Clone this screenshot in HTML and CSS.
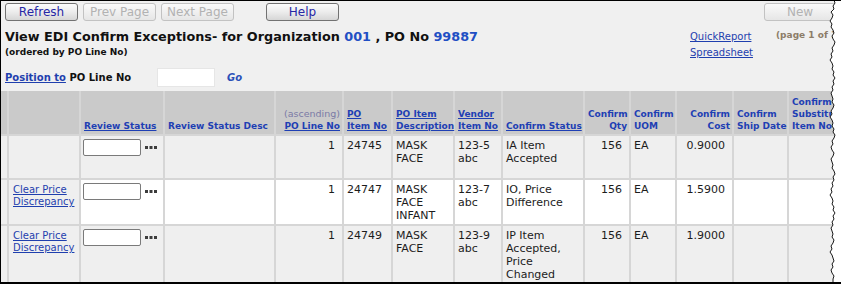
FILE: index.html
```html
<!DOCTYPE html>
<html lang="en">
<head>
    <meta charset="UTF-8">
    <meta name="viewport" content="width=device-width, initial-scale=1.0">
    <title>View EDI Confirm Exceptions</title>
    <link rel="stylesheet" href="styles.css">
</head>
<body>
    <div class="frame">
        <div class="toolbar">
            <button class="btn">Refresh</button>
            <button class="btn" disabled>Prev Page</button>
            <button class="btn" disabled>Next Page</button>
            <button class="btn btn-help">Help</button>
            <button class="btn btn-new" disabled>New</button>
        </div>

        <div class="heading">
            <div class="heading-main">
                <h1>View EDI Confirm Exceptions- for Organization <span class="key">001</span> , PO No <span class="key">99887</span></h1>
                <div class="sort-note">(ordered by PO Line No)</div>
            </div>
            <div class="reports">
                <a href="#">QuickReport</a>
                <a href="#">Spreadsheet</a>
            </div>
            <div class="pager">(page 1 of 1)</div>
        </div>

        <div class="position">
            <span class="position-label"><a href="#">Position to</a> PO Line No</span>
            <input type="text" class="position-input">
            <a href="#" class="go">Go</a>
        </div>

        <table class="grid">
            <thead>
                <tr>
                    <th class="w-sel"></th>
                    <th class="w-act"></th>
                    <th class="w-rev"><a href="#">Review Status</a></th>
                    <th class="w-desc"><span>Review Status Desc</span></th>
                    <th class="w-line num"><span class="asc">(ascending)</span><br><a href="#">PO Line No</a></th>
                    <th class="w-item"><a href="#">PO<br>Item No</a></th>
                    <th class="w-itemdesc"><a href="#">PO Item<br>Description</a></th>
                    <th class="w-vendor"><a href="#">Vendor<br>Item No</a></th>
                    <th class="w-status"><a href="#">Confirm Status</a></th>
                    <th class="w-qty num"><span>Confirm<br>Qty</span></th>
                    <th class="w-uom"><span>Confirm<br>UOM</span></th>
                    <th class="w-cost num"><span>Confirm<br>Cost</span></th>
                    <th class="w-ship"><span>Confirm<br>Ship Date</span></th>
                    <th class="w-sub"><span>Confirm<br>Substitute<br>Item No</span></th>
                </tr>
            </thead>
            <tbody>
                <tr class="row-1 shaded">
                    <td class="side"></td>
                    <td class="side"></td>
                    <td class="rev"><input type="text" class="rev-input"><svg class="dots" width="12" height="4" viewBox="0 0 12 4"><rect x="0" y="0" width="3" height="3"/><rect x="4.5" y="0" width="3" height="3"/><rect x="9" y="0" width="3" height="3"/></svg></td>
                    <td></td>
                    <td class="num">1</td>
                    <td>24745</td>
                    <td>MASK FACE</td>
                    <td>123-5 abc</td>
                    <td>IA Item Accepted</td>
                    <td class="num">156</td>
                    <td>EA</td>
                    <td class="num">0.9000</td>
                    <td></td>
                    <td></td>
                </tr>
                <tr class="row-2">
                    <td class="side"></td>
                    <td class="side"><a href="#" class="action">Clear Price Discrepancy</a></td>
                    <td class="rev"><input type="text" class="rev-input"><svg class="dots" width="12" height="4" viewBox="0 0 12 4"><rect x="0" y="0" width="3" height="3"/><rect x="4.5" y="0" width="3" height="3"/><rect x="9" y="0" width="3" height="3"/></svg></td>
                    <td></td>
                    <td class="num">1</td>
                    <td>24747</td>
                    <td>MASK FACE INFANT</td>
                    <td>123-7 abc</td>
                    <td>IO, Price Difference</td>
                    <td class="num">156</td>
                    <td>EA</td>
                    <td class="num">1.5900</td>
                    <td></td>
                    <td></td>
                </tr>
                <tr class="row-3 shaded">
                    <td class="side"></td>
                    <td class="side"><a href="#" class="action">Clear Price Discrepancy</a></td>
                    <td class="rev"><input type="text" class="rev-input"><svg class="dots" width="12" height="4" viewBox="0 0 12 4"><rect x="0" y="0" width="3" height="3"/><rect x="4.5" y="0" width="3" height="3"/><rect x="9" y="0" width="3" height="3"/></svg></td>
                    <td></td>
                    <td class="num">1</td>
                    <td>24749</td>
                    <td>MASK FACE</td>
                    <td>123-9 abc</td>
                    <td>IP Item Accepted, Price Changed</td>
                    <td class="num">156</td>
                    <td>EA</td>
                    <td class="num">1.9000</td>
                    <td></td>
                    <td></td>
                </tr>
            </tbody>
        </table>

        <!-- torn right edge of the capture -->
        <svg class="torn" width="14" height="284" viewBox="0 0 14 284">
            <path class="torn-fill" d="M7 0 L8 3 L6 6 L7 9 L4 12 L6 15 L5 18 L3 21 L5 24 L4 27 L6 30 L7 33 L5 36 L6 39 L8 42 L7 45 L5 48 L6 51 L4 54 L5 57 L3 60 L5 63 L6 66 L5 69 L7 72 L6 75 L8 78 L6 81 L7 84 L5 87 L6 90 L4 93 L5 96 L6 99 L5 102 L7 105 L6 108 L4 111 L5 114 L3 117 L5 120 L6 123 L5 126 L7 129 L6 132 L8 135 L7 138 L5 141 L6 144 L4 147 L5 150 L7 153 L6 156 L4 159 L5 162 L6 165 L5 168 L7 171 L8 174 L6 177 L7 180 L5 183 L6 186 L4 189 L5 192 L3 195 L5 198 L6 201 L5 204 L7 207 L6 210 L8 213 L6 216 L7 219 L5 222 L6 225 L4 228 L5 231 L6 234 L5 237 L7 240 L6 243 L4 246 L5 249 L3 252 L5 255 L6 258 L7 261 L5 264 L6 267 L4 270 L5 273 L7 276 L6 279 L6 284 L14 284 L14 0 Z"/>
            <polyline class="torn-line" points="7,0 8,3 6,6 7,9 4,12 6,15 5,18 3,21 5,24 4,27 6,30 7,33 5,36 6,39 8,42 7,45 5,48 6,51 4,54 5,57 3,60 5,63 6,66 5,69 7,72 6,75 8,78 6,81 7,84 5,87 6,90 4,93 5,96 6,99 5,102 7,105 6,108 4,111 5,114 3,117 5,120 6,123 5,126 7,129 6,132 8,135 7,138 5,141 6,144 4,147 5,150 7,153 6,156 4,159 5,162 6,165 5,168 7,171 8,174 6,177 7,180 5,183 6,186 4,189 5,192 3,195 5,198 6,201 5,204 7,207 6,210 8,213 6,216 7,219 5,222 6,225 4,228 5,231 6,234 5,237 7,240 6,243 4,246 5,249 3,252 5,255 6,258 7,261 5,264 6,267 4,270 5,273 7,276 6,279 6,284"/>
        </svg>
    </div>
</body>
</html>
```

FILE: styles.css
```css
body {
    margin: 0;
    font-family: "DejaVu Sans", Verdana, sans-serif;
    color: #1c1c1c;
    background: #fff;
}
a {
    color: #1f3fae;
}
.frame {
    position: relative;
    width: 841px;
    height: 284px;
    box-sizing: border-box;
    border: 1px solid #000;
    border-right: none;
    border-bottom-width: 2px;
    background: #f0f0f0;
    overflow: hidden;
}

/* toolbar */
.toolbar {
    display: flex;
    gap: 5px;
    padding: 2px 5px 0 4px;
}
.btn {
    width: 73px;
    height: 18px;
    padding: 0;
    font-family: "DejaVu Sans", Verdana, sans-serif;
    font-size: 12px;
    line-height: 16px;
    color: #2626a6;
    background: linear-gradient(#fcfcfc, #ececec 50%, #d6d6d6);
    border: 1px solid #727272;
    border-radius: 3px;
}
.btn:disabled {
    color: #b2b2b2;
    background: linear-gradient(#fafafa, #f0f0f0 50%, #e6e6e6);
    border-color: #c2c2c2;
}
.btn-help {
    margin-left: 27px;
}
.btn-new {
    margin-left: auto;
    width: 72px;
}

/* heading */
.heading {
    display: grid;
    grid-template-columns: 685px 86px 1fr;
    padding: 8px 0 0 4px;
}
.heading h1 {
    margin: 0;
    font-size: 12.8px;
    line-height: 16px;
    font-weight: bold;
    color: #111;
}
.key {
    color: #1f4fc4;
}
.sort-note {
    margin-top: 2px;
    font-size: 9px;
    line-height: 11px;
    font-weight: bold;
    color: #111;
}
.reports {
    display: flex;
    flex-direction: column;
    font-size: 10px;
    line-height: 16px;
}
.pager {
    padding-top: 1px;
    font-size: 9px;
    line-height: 11px;
    font-weight: bold;
    color: #8c7c68;
    white-space: nowrap;
}

/* position row */
.position {
    display: flex;
    align-items: center;
    height: 19px;
    margin-top: 7px;
    padding-left: 4px;
    font-size: 10px;
    font-weight: bold;
    color: #111;
}
.position-label {
    width: 152px;
}
.position-input {
    width: 58px;
    height: 19px;
    box-sizing: border-box;
    border: 1px solid #e6e6e6;
    background: #fff;
    padding: 0;
}
.go {
    margin-left: 12px;
    font-style: italic;
    text-decoration: none;
    color: #2a4fb8;
}

/* results grid */
.grid {
    margin-top: 4px;
    width: 859px;
    table-layout: fixed;
    border-collapse: separate;
    border-spacing: 0;
}
.grid th,
.grid td {
    box-sizing: border-box;
    border-right: 2px solid #d6d6d6;
    border-bottom: 2px solid #d6d6d6;
}
.grid th {
    height: 45px;
    padding: 0 2px 2px 3px;
    background: #cacaca;
    vertical-align: bottom;
    text-align: left;
    white-space: nowrap;
    font-size: 9px;
    line-height: 12px;
    font-weight: bold;
    color: #1e3fb4;
}
.grid th a {
    color: #1e3fb4;
}
.grid th.num {
    text-align: right;
}
.asc {
    font-size: 9.5px;
    font-weight: normal;
    color: #7a7aa6;
}
.w-sel { width: 8px; }
.w-act { width: 72px; }
.w-rev { width: 84px; }
.w-desc { width: 111px; }
.w-line { width: 68px; }
.w-item { width: 49px; }
.w-itemdesc { width: 62px; }
.w-vendor { width: 48px; }
.w-status { width: 82px; }
.w-qty { width: 46px; }
.w-uom { width: 46px; }
.w-cost { width: 57px; }
.w-ship { width: 55px; }
.w-sub { width: 71px; }

.grid td {
    padding: 3px 3px 0;
    vertical-align: top;
    font-size: 11px;
    line-height: 13px;
    background: #fff;
}
.grid tr.shaded td,
.grid td.side {
    background: #efefef;
}
.grid td.num {
    text-align: right;
    padding-right: 7px;
}
.grid td.rev {
    padding-left: 2px;
    white-space: nowrap;
}
.row-1 { height: 44px; }
.row-2 { height: 46px; }
.row-3 { height: 70px; }

.rev-input {
    width: 58px;
    height: 17px;
    box-sizing: border-box;
    padding: 0;
    border: 1px solid #7a7a7a;
    border-radius: 2px;
    background: #fff;
    vertical-align: top;
}
.dots {
    margin: 7px 0 0 4px;
    vertical-align: top;
    fill: #3c3c3c;
}
.action {
    display: block;
    padding: 1px 0 0 1px;
    font-size: 10px;
    line-height: 12px;
}

.torn {
    position: absolute;
    top: -1px;
    right: 0;
}
.torn-fill {
    fill: #fff;
}
.torn-line {
    fill: none;
    stroke: #1a1a1a;
    stroke-width: 1;
}
```
